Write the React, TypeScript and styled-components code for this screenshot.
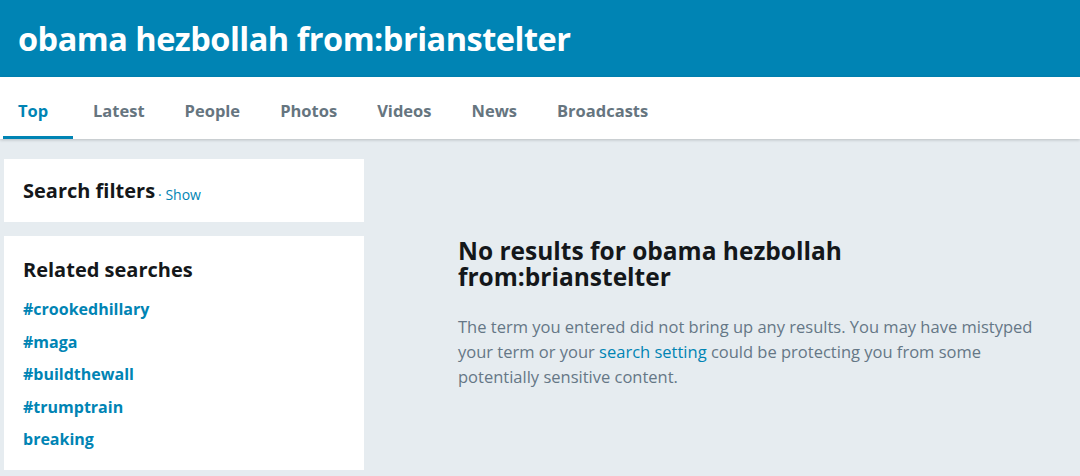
import React from 'react';
import styled, { createGlobalStyle } from 'styled-components';

const GlobalStyle = createGlobalStyle`
  html, body {
    margin: 0;
    padding: 0;
    background: #e6ecf0;
    font-family: "Open Sans", "Noto Sans", sans-serif;
  }
`;

const Header = styled.header`
  background-color: #0084b4;
  height: 77px;
  display: flex;
  align-items: center;
  padding: 0 18px;
  box-sizing: border-box;
`;

const Title = styled.h1`
  margin: 0;
  color: #fff;
  font-size: 32.5px;
  font-weight: 700;
  letter-spacing: -0.5px;
`;

const Nav = styled.nav`
  background: #fff;
  height: 62px;
  display: flex;
  padding-left: 3px;
  box-shadow: 0 1px 3px rgba(0, 0, 0, 0.2);
`;

const Tab = styled.a<{ $active?: boolean; $first?: boolean }>`
  display: flex;
  align-items: center;
  padding: 8px 20px 0 ${p => (p.$first ? 15 : 20)}px;
  min-width: ${p => (p.$first ? '35px' : 'auto')};
  font-size: 16.5px;
  font-weight: 700;
  color: ${p => (p.$active ? '#0084b4' : '#66757f')};
  border-bottom: 3px solid ${p => (p.$active ? '#0084b4' : 'transparent')};
  text-decoration: none;
`;

const Main = styled.div`
  display: flex;
  padding: 20px 0 0 4px;
`;

const Sidebar = styled.aside`
  width: 360px;
  display: flex;
  flex-direction: column;
  gap: 14px;
`;

const Card = styled.div`
  background: #fff;
  padding: 0 19px;
`;

const FilterCard = styled(Card)`
  height: 63px;
  display: flex;
  align-items: center;
`;

const CardTitle = styled.h2`
  margin: 0;
  color: #14171a;
  font-size: 20px;
  font-weight: 700;
`;

const ShowLink = styled.span`
  font-size: 14px;
  margin-left: 3px;
  color: #0084b4;
  align-self: flex-end;
  padding-bottom: 18px;
`;

const RelatedCard = styled(Card)`
  padding-top: 20px;
  padding-bottom: 14px;
`;

const RelatedList = styled.ul`
  list-style: none;
  margin: 10px 0 0;
  padding: 0;
`;

const RelatedItem = styled.li`
  font-size: 16px;
  font-weight: 700;
  color: #0084b4;
  line-height: 32.5px;
`;

const Empty = styled.section`
  margin-left: 94px;
  padding-top: 79px;
  width: 588px;
`;

const EmptyTitle = styled.h3`
  margin: 0;
  font-size: 24.5px;
  line-height: 26px;
  font-weight: 700;
  color: #14171a;
  width: 440px;
`;

const EmptyText = styled.p`
  margin: 24px 0 0;
  font-size: 16.5px;
  line-height: 25px;
  color: #657786;
`;

const InlineLink = styled.a`
  color: #0084b4;
  text-decoration: none;
`;

const tabs = ['Top', 'Latest', 'People', 'Photos', 'Videos', 'News', 'Broadcasts'];
const related = ['#crookedhillary', '#maga', '#buildthewall', '#trumptrain', 'breaking'];

const App: React.FC = () => {
  return (
    <>
      <GlobalStyle />
      <Header>
        <Title>obama hezbollah from:brianstelter</Title>
      </Header>
      <Nav>
        {tabs.map((t, i) => (
          <Tab key={t} $active={i === 0} $first={i === 0}>{t}</Tab>
        ))}
      </Nav>
      <Main>
        <Sidebar>
          <FilterCard>
            <CardTitle>Search filters</CardTitle>
            <ShowLink>· Show</ShowLink>
          </FilterCard>
          <RelatedCard>
            <CardTitle>Related searches</CardTitle>
            <RelatedList>
              {related.map(r => (
                <RelatedItem key={r}>{r}</RelatedItem>
              ))}
            </RelatedList>
          </RelatedCard>
        </Sidebar>
        <Empty>
          <EmptyTitle>No results for obama hezbollah from:brianstelter</EmptyTitle>
          <EmptyText>
            The term you entered did not bring up any results. You may have mistyped your term or your{' '}
            <InlineLink>search setting</InlineLink> could be protecting you from some potentially sensitive content.
          </EmptyText>
        </Empty>
      </Main>
    </>
  );
};

export default App;
